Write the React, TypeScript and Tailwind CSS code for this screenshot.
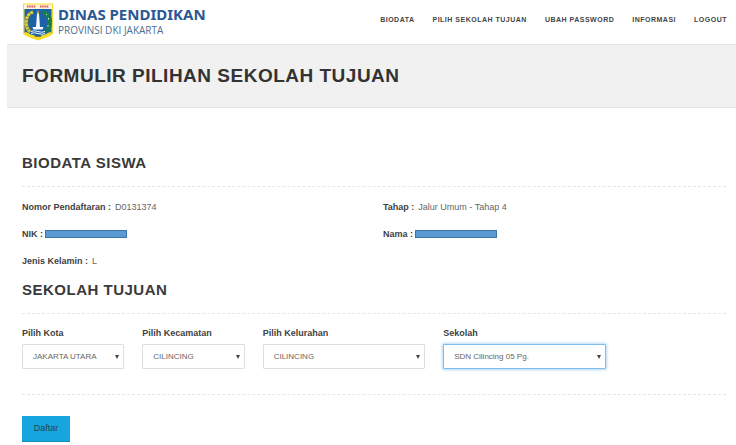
import React from "react";

const navItems = ["BIODATA", "PILIH SEKOLAH TUJUAN", "UBAH PASSWORD", "INFORMASI", "LOGOUT"];

function Crest() {
  return (
    <svg viewBox="0 0 32 38" className="h-[38px] w-8 shrink-0" aria-hidden="true">
      <path d="M1 0.500H31V31L26 34L16 37.500L6 34L1 31Z" fill="#f5df2c" />
      <path d="M2.500 6H29.500V29.500L25 32.500L16 35L7 32.500L2.500 29.500Z" fill="#1d62a8" />
      <path d="M2 1.500H30V6H2Z" fill="#fdf3df" />
      <path d="M5 3.500H14M18 3.500H27" stroke="#df5a50" strokeWidth="2" strokeDasharray="1.5 .7" />
      <path d="M11 9C3 12 2 23 8 29" fill="none" stroke="#dcc832" strokeWidth="3.400" strokeDasharray="3 .5" />
      <path d="M10 11C5.500 15 5.500 22 9.500 27" fill="none" stroke="#3f6350" strokeWidth="1" />
      <path d="M21 9C29 12 30 23 24 29" fill="none" stroke="#17804a" strokeWidth="4.400" strokeDasharray="4 .4" />
      <path d="M24.500 11V12M26.500 15V16.500M26 22V23.500" stroke="#dcebd3" strokeWidth="1" />
      <path d="M15 11H17L18 24H21.500L20.500 26.500H11.500L10.500 24H14Z" fill="#f6fafc" />
      <path d="M14.800 11L16 7L17.200 11Z" fill="#f0bd29" />
      <path d="M9 28.500Q12 27 16 28.500T23 28.500M9 30.500Q12 29 16 30.500T23 30.500" fill="none" stroke="#edf6fa" strokeWidth="1" />
      <path d="M3 30L8 32.500L16 35L24 32.500L29 30" fill="none" stroke="#f2d92b" strokeWidth="2.600" />
      <path d="M13 33.500H19" stroke="#856e29" strokeWidth="1" />
    </svg>
  );
}

function Heading({ children }: { children: React.ReactNode }) {
  return (
    <h2 className="border-b border-dashed border-[#e6e6e6] pb-[13px] text-[15px] leading-5 font-bold tracking-[0.5px] text-[#3a3a3a]">
      {children}
    </h2>
  );
}

function Field({ label, children }: { label: string; children: React.ReactNode }) {
  return (
    <div className="flex h-[27px] items-center gap-1">
      <dt className="font-bold text-[#3f3f3f]">{label} :</dt>
      <dd className="text-[#666]">{children}</dd>
    </div>
  );
}

function Redacted() {
  return <span className="mb-0.5 -ml-0.5 block h-2 w-[82px] border border-[#3f73a5] bg-[#5b9bd5]" />;
}

type SelectProps = { id: string; label: string; value: string; span: string; active?: boolean };

function SelectField({ id, label, value, span, active }: SelectProps) {
  return (
    <div className={span}>
      <label htmlFor={id} className="block leading-3 font-bold text-[#3f3f3f]">
        {label}
      </label>
      <div className="relative mt-[5px]">
        <select
          id={id}
          className={
            "block h-[25px] w-full appearance-none rounded-[1px] border bg-white pr-4 pl-[10px] text-[8px] text-[#666] outline-none " +
            (active ? "border-[#7fbdec] shadow-[0_0_3px_1px_#b5daf5]" : "border-[#dedede]")
          }
        >
          <option>{value}</option>
        </select>
        <svg viewBox="0 0 4 4" className="pointer-events-none absolute top-[11px] right-[5px] h-1 w-1" aria-hidden="true">
          <path d="M0 0H4L2 4Z" fill="#444" />
        </svg>
      </div>
    </div>
  );
}

export default function App() {
  return (
    <div className="bg-white pl-[7px] font-['Liberation_Sans',Arial,sans-serif] text-[9px] text-[#444]">
      <header className="flex h-11 items-start justify-between pt-[3px] pr-[9px] pl-[15px]">
        <a href="#" className="flex gap-1">
          <Crest />
          <span className="pt-[2px]">
            <span className="block font-['Noto_Sans',sans-serif] text-[15px] leading-[18px] font-bold text-[#2a5795]">
              DINAS PENDIDIKAN
            </span>
            <span className="block font-['Open_Sans',sans-serif] text-[10px] leading-[14px] text-[#4a7194]">
              PROVINSI DKI JAKARTA
            </span>
          </span>
        </a>
        <nav className="flex gap-[18px] pt-[11px] text-[7px] leading-[11px] font-bold tracking-[0.5px] text-[#444]">
          {navItems.map((item) => (
            <a key={item} href="#" className="whitespace-nowrap">
              {item}
            </a>
          ))}
        </nav>
      </header>

      <section className="border-y border-[#e6e6e6] bg-[#f1f1f1] py-[19px] pl-[15px]">
        <h1 className="text-[19px] leading-6 font-bold tracking-[0.5px] text-[#333]">FORMULIR PILIHAN SEKOLAH TUJUAN</h1>
      </section>

      <main className="pt-[45px] pr-[10px] pl-[15px]">
        <Heading>BIODATA SISWA</Heading>
        <dl className="mt-[7px] grid grid-cols-2 gap-x-[18px]">
          <Field label="Nomor Pendaftaran">D0131374</Field>
          <Field label="Tahap">Jalur Umum - Tahap 4</Field>
          <Field label="NIK">
            <Redacted />
          </Field>
          <Field label="Nama">
            <Redacted />
          </Field>
          <Field label="Jenis Kelamin">L</Field>
        </dl>

        <div className="mt-[5px]">
          <Heading>SEKOLAH TUJUAN</Heading>
        </div>
        <form onSubmit={(event) => event.preventDefault()}>
          <div className="grid grid-cols-12 gap-x-[18px] border-b border-dashed border-[#e6e6e6] pt-[13px] pb-[25px]">
            <SelectField id="kota" label="Pilih Kota" value="JAKARTA UTARA" span="col-span-2" />
            <SelectField id="kecamatan" label="Pilih Kecamatan" value="CILINCING" span="col-span-2" />
            <SelectField id="kelurahan" label="Pilih Kelurahan" value="CILINCING" span="col-span-3" />
            <SelectField id="sekolah" label="Sekolah" value="SDN Cilincing 05 Pg." span="col-span-3" active />
          </div>
          <button type="submit" className="mt-[21px] h-[26px] w-12 border-b border-[#1290bd] bg-[#16a5dc] text-[9px] text-[#244555]">
            Daftar
          </button>
        </form>
      </main>
    </div>
  );
}
